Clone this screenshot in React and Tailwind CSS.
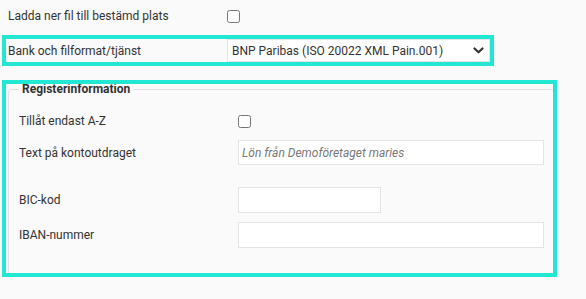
import React from 'react';

function Chevron() {
    return (
        <svg width="11" height="7" viewBox="0 0 11 7" className="text-[#333]">
            <path d="M1.5 1.5 L5.5 5.3 L9.5 1.5" fill="none" stroke="currentColor" strokeWidth="2.2" strokeLinecap="round" strokeLinejoin="round" />
        </svg>
    );
}

function Checkbox() {
    return <input type="checkbox" className="m-0 w-[13px] h-[13px] accent-gray-500" />;
}

export default function App() {
    return (
        <div className="min-h-screen bg-[#fafafa] font-['Roboto',sans-serif] text-[12px] text-[#333] pt-[3px]">
            <div className="flex items-center h-[26px] pl-[8px]">
                <div className="w-[219px]">Ladda ner fil till bestämd plats</div>
                <Checkbox />
            </div>

            <div className="ml-[2px] mt-[6px] w-[492px] h-[31px] border-4 border-[#22e8d3] flex">
                <div className="w-[221px] pl-[2px] flex items-center">Bank och filformat/tjänst</div>
                <div className="flex-1 bg-white border border-[#e4e4e4] flex items-center justify-between pl-[4px] pr-[5px]">
                    <span>BNP Paribas (ISO 20022 XML Pain.001)</span>
                    <Chevron />
                </div>
            </div>

            <div className="ml-[2px] mt-[14px] w-[555px] h-[197px] border-4 border-[#22e8d3] overflow-hidden">
                <fieldset className="mx-[2px] mt-0 h-[200px] border border-[#e2e2e2] rounded-[3px] pl-[10px] pr-[9px]">
                    <legend className="px-[3px] font-bold text-[12px] leading-[10px]">Registerinformation</legend>
                    <div className="flex items-center h-[22px] mt-[16px]">
                        <div className="w-[219px]">Tillåt endast A-Z</div>
                        <Checkbox />
                    </div>
                    <div className="flex items-center h-[25px] mt-[8px]">
                        <div className="w-[219px]">Text på kontoutdraget</div>
                        <div className="w-[306px] h-full bg-white border border-[#e4e4e4] flex items-center pl-[3px] italic text-[#777]">
                            Lön från Demoföretaget maries
                        </div>
                    </div>
                    <div className="flex items-center h-[26px] mt-[22px]">
                        <div className="w-[219px]">BIC-kod</div>
                        <div className="w-[143px] h-full bg-white border border-[#e4e4e4]" />
                    </div>
                    <div className="flex items-center h-[26px] mt-[9px]">
                        <div className="w-[219px]">IBAN-nummer</div>
                        <div className="w-[306px] h-full bg-white border border-[#e4e4e4]" />
                    </div>
                </fieldset>
            </div>
        </div>
    );
}
